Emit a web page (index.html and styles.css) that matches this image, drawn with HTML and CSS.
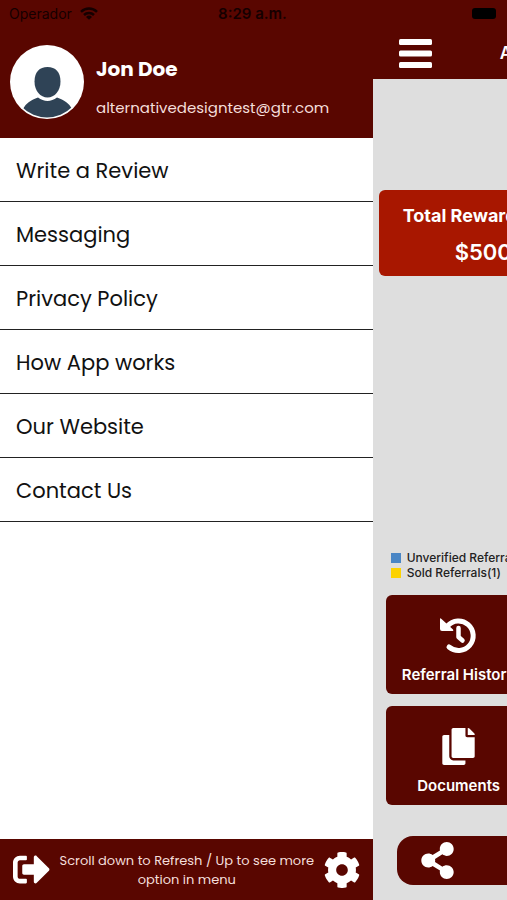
FILE: index.html
```html
<!DOCTYPE html>
<html lang="en">
<head>
<meta charset="utf-8">
<meta name="viewport" content="width=device-width, initial-scale=1">
<title>Referrals</title>
<link rel="stylesheet" href="styles.css">
</head>
<body>
<div class="app">
  <div class="status">
    <div class="carrier">
      <span>Operador</span>
      <svg class="wifi" viewBox="0 0 18 13" aria-hidden="true"><path d="M1 4.800a11.500 11.500 0 0 1 16 0M4 8a7.200 7.200 0 0 1 10 0" fill="none" stroke="currentColor" stroke-width="2.500"/><path d="M9 12.800L6 10a4.300 4.300 0 0 1 6 0z"/></svg>
    </div>
    <time class="clock">8:29 a.m.</time>
    <div class="battery-box"><span class="battery"></span></div>
  </div>
  <div class="panes">
    <aside class="drawer">
      <header class="profile">
        <svg class="avatar" viewBox="0 0 74 74" role="img" aria-label="Profile picture">
          <defs><clipPath id="disc"><circle cx="37" cy="37" r="35.500"/></clipPath></defs>
          <circle cx="37" cy="37" r="37" fill="#fff"/>
          <g clip-path="url(#disc)" fill="#2f4356">
            <path d="M37.500 22c8 0 13 5 13 14.500C50.500 46 44.500 52.500 37.500 52.500S24.500 46 24.500 36.500C24.500 27 29.500 22 37.500 22z"/>
            <path d="M13 74V64c3-6 8-9 15-11.500 6 4.500 13 4.500 19 0 7 2.500 12 5.500 15 11.500v10z"/>
          </g>
        </svg>
        <div class="identity">
          <h1 class="name">Jon Doe</h1>
          <p class="email">alternativedesigntest@gtr.com</p>
        </div>
      </header>
      <nav class="menu">
        <a href="#review">Write a Review</a>
        <a href="#messaging">Messaging</a>
        <a href="#privacy">Privacy Policy</a>
        <a href="#how">How App works</a>
        <a href="#website">Our Website</a>
        <a href="#contact">Contact Us</a>
      </nav>
      <footer class="drawer-foot">
        <button class="icon-button" aria-label="Sign out"><svg class="icon-exit" viewBox="0 56 512 400" aria-hidden="true"><path d="M497 273L329 441c-15 15-41 4.500-41-17v-96H152c-13.300 0-24-10.700-24-24v-96c0-13.300 10.700-24 24-24h136V88c0-21.400 25.900-32 41-17l168 168c9.300 9.400 9.300 24.600 0 34zM192 436v-40c0-6.600-5.400-12-12-12H96c-17.700 0-32-14.300-32-32V160c0-17.700 14.300-32 32-32h84c6.600 0 12-5.400 12-12V76c0-6.600-5.400-12-12-12H96c-53 0-96 43-96 96v192c0 53 43 96 96 96h84c6.600 0 12-5.400 12-12z"/></svg></button>
        <p>Scroll down to Refresh / Up to see more option in menu</p>
        <button class="icon-button" aria-label="Settings"><svg class="icon-cog" viewBox="8 8 496 496" aria-hidden="true"><path d="M487.400 315.700l-42.600-24.600c4.300-23.200 4.300-47 0-70.200l42.600-24.600c4.900-2.800 7.100-8.600 5.500-14-11.100-35.600-30-67.800-54.700-94.600-3.800-4.100-10-5.100-14.800-2.300L380.800 110c-17.900-15.400-38.500-27.300-60.800-35.100V25.800c0-5.600-3.900-10.500-9.400-11.700-36.700-8.200-74.300-7.800-109.200 0-5.500 1.200-9.400 6.100-9.400 11.700V75c-22.200 7.900-42.800 19.800-60.800 35.100L88.700 85.500c-4.900-2.800-11-1.900-14.800 2.300-24.700 26.700-43.600 58.900-54.700 94.600-1.700 5.400.6 11.200 5.500 14L67.300 221c-4.300 23.200-4.300 47 0 70.200l-42.600 24.600c-4.900 2.800-7.100 8.600-5.500 14 11.100 35.600 30 67.800 54.700 94.600 3.800 4.100 10 5.100 14.800 2.300l42.600-24.600c17.900 15.400 38.500 27.300 60.800 35.100v49.200c0 5.600 3.900 10.500 9.400 11.700 36.700 8.200 74.300 7.800 109.200 0 5.500-1.200 9.400-6.100 9.400-11.700v-49.200c22.200-7.900 42.800-19.800 60.800-35.100l42.600 24.600c4.900 2.800 11 1.900 14.800-2.300 24.700-26.700 43.600-58.900 54.700-94.600 1.500-5.500-.7-11.300-5.600-14.100zM256 336c-44.100 0-80-35.900-80-80s35.900-80 80-80 80 35.900 80 80-35.900 80-80 80z"/></svg></button>
      </footer>
    </aside>
    <main class="home">
      <header class="home-bar">
        <button class="icon-button" aria-label="Menu"><svg class="icon-bars" viewBox="0 0 33 29" aria-hidden="true"><rect width="33" height="6" rx="1.500"/><rect y="11.500" width="33" height="6" rx="1.500"/><rect y="23" width="33" height="6" rx="1.500"/></svg></button>
        <span class="home-title">A</span>
      </header>
      <section class="reward">
        <h2>Total Rewards</h2>
        <p>$500</p>
      </section>
      <ul class="legend">
        <li><i class="swatch blue"></i>Unverified Referrals</li>
        <li><i class="swatch yellow"></i>Sold Referrals(1)</li>
      </ul>
      <div class="tiles">
        <button class="tile"><svg class="icon-history" viewBox="0 0 37 37" aria-hidden="true"><path d="M7.500 9A14.700 14.700 0 1 1 9 30" fill="none" stroke="currentColor" stroke-width="5" stroke-linecap="round"/><path d="M0 2.500Q0 .5 1.500 2L13 12.500Q14 14 12 14H2Q0 14 0 12z"/><path d="M18.500 11v9l4 3.500" fill="none" stroke="currentColor" stroke-width="4.500" stroke-linecap="round" stroke-linejoin="round"/></svg><span>Referral History</span></button>
        <button class="tile"><svg class="icon-copy" viewBox="0 0 448 512" aria-hidden="true"><path d="M320 448v40c0 13.255-10.745 24-24 24H24c-13.255 0-24-10.745-24-24V120c0-13.255 10.745-24 24-24h72v296c0 30.879 25.121 56 56 56h168zm0-344V0H152c-13.255 0-24 10.745-24 24v368c0 13.255 10.745 24 24 24h272c13.255 0 24-10.745 24-24V128H344c-13.200 0-24-10.800-24-24zm120.971-31.029L375.029 7.029A24 24 0 0 0 358.059 0H352v96h96v-6.059a24 24 0 0 0-7.029-16.970z"/></svg><span>Documents</span></button>
      </div>
      <button class="share" aria-label="Share"><svg class="icon-share" viewBox="0 0 448 512" aria-hidden="true"><path d="M352 320c-22.608 0-43.387 7.819-59.790 20.895l-102.486-64.054a96.551 96.551 0 0 0 0-41.683l102.486-64.054C308.613 184.181 329.392 192 352 192c53.019 0 96-42.981 96-96S405.019 0 352 0s-96 42.981-96 96c0 7.158.79 14.130 2.276 20.841L155.790 180.895C139.387 167.819 118.608 160 96 160c-53.019 0-96 42.981-96 96s42.981 96 96 96c22.608 0 43.387-7.819 59.790-20.895l102.486 64.054A96.301 96.301 0 0 0 256 416c0 53.019 42.981 96 96 96s96-42.981 96-96-42.981-96-96-96z"/></svg></button>
    </main>
  </div>
</div>
</body>
</html>
```
FILE: styles.css
```css
:root {
  --maroon: #590600;
  --red: #a81700;
  --grey: #dedede;
}

* {
  box-sizing: border-box;
}

body,
h1,
h2,
p,
ul {
  margin: 0;
  padding: 0;
}

body {
  font-family: Inter, "Liberation Sans", sans-serif;
  background: var(--grey);
}

button {
  border: 0;
  padding: 0;
  font: inherit;
  color: #fff;
  background: none;
}

svg {
  display: block;
  fill: currentColor;
}

.app {
  display: flex;
  flex-direction: column;
  min-height: 100vh;
}

.status {
  display: grid;
  grid-template-columns: 1fr auto 1fr;
  align-items: center;
  height: 27px;
  padding: 0 11px 0 9px;
  font-size: 14px;
  color: #150000;
  background: var(--maroon);
}

.carrier {
  display: flex;
  align-items: center;
  gap: 8px;
}

.wifi {
  width: 18px;
  height: 13px;
}

.clock {
  font-size: 15px;
  font-weight: 600;
}

.battery-box {
  display: flex;
  justify-content: flex-end;
}

.battery {
  width: 24px;
  height: 11px;
  border-radius: 3px;
  background: #000;
}

.panes {
  display: flex;
  flex: 1;
}

.drawer {
  display: flex;
  flex-direction: column;
  flex: 0 0 auto;
  width: 73.5%;
  font-family: Poppins, Inter, sans-serif;
  background: #fff;
}

.profile {
  display: flex;
  gap: 12px;
  height: 111px;
  padding: 18px 10px;
  color: #fff;
  background: var(--maroon);
}

.avatar {
  flex: none;
  width: 74px;
  height: 74px;
}

.identity {
  padding-top: 8px;
}

.name {
  font-size: 20px;
  line-height: 32px;
  font-weight: 700;
}

.email {
  padding-top: 12px;
  font-size: 15px;
  line-height: 22px;
  color: #f4dedb;
}

.menu {
  flex: 1;
}

.menu a {
  display: flex;
  align-items: center;
  height: 64px;
  padding: 2px 16px 0;
  border-bottom: 1px solid #222;
  font-size: 21px;
  color: #111;
  text-decoration: none;
}

.drawer-foot {
  display: flex;
  align-items: center;
  justify-content: space-between;
  min-height: 61px;
  padding: 0 13px;
  color: #fff;
  background: var(--maroon);
}

.drawer-foot p {
  flex: 1;
  font-size: 13px;
  line-height: 19px;
  text-align: center;
  color: #f4dedb;
}

.icon-exit {
  width: 37px;
  height: 29px;
}

.icon-cog {
  width: 36px;
  height: 36px;
}

.home {
  flex: 1;
  min-width: 0;
  overflow: hidden;
  white-space: nowrap;
  background: var(--grey);
}

.home-bar {
  display: flex;
  align-items: center;
  gap: 68px;
  height: 52px;
  padding: 0 0 0 26px;
  color: #fff;
  background: var(--maroon);
}

.icon-bars {
  width: 33px;
  height: 29px;
}

.home-title {
  font-size: 17px;
  font-weight: 600;
}

.reward {
  height: 86px;
  margin: 111px 0 0 6px;
  padding: 12px 0 0 24px;
  border-radius: 6px 0 0 6px;
  color: #fff;
  background: var(--red);
}

.reward h2 {
  font-size: 18px;
  line-height: 28px;
  font-weight: 700;
}

.reward p {
  padding: 6px 0 0 52px;
  font-size: 22px;
  line-height: 32px;
  font-weight: 600;
}

.legend {
  margin: 274px 0 0 18px;
  list-style: none;
  font-size: 12px;
  font-weight: 500;
  line-height: 15px;
  color: #222;
}

.legend li {
  display: flex;
  align-items: center;
  gap: 6px;
}

.swatch {
  flex: none;
  width: 10px;
  height: 10px;
}

.blue {
  background: #4a86c5;
}

.yellow {
  background: #fcd202;
}

.tiles {
  display: grid;
  grid-template-columns: 146px;
  gap: 12px;
  margin: 15px 0 0 13px;
}

.tile {
  display: flex;
  flex-direction: column;
  align-items: center;
  justify-content: space-between;
  height: 99px;
  padding: 22px 0 8px;
  border-radius: 6px;
  background: var(--maroon);
}

.tile span {
  font-size: 15px;
  line-height: 22px;
  font-weight: 600;
}

.icon-history,
.icon-copy {
  width: 37px;
  height: 37px;
}

.share {
  display: flex;
  align-items: center;
  width: 100%;
  height: 49px;
  margin: 31px 0 0 24px;
  padding: 0 24px;
  border-radius: 16px;
  background: var(--maroon);
}

.icon-share {
  width: 33px;
  height: 37px;
}
```
